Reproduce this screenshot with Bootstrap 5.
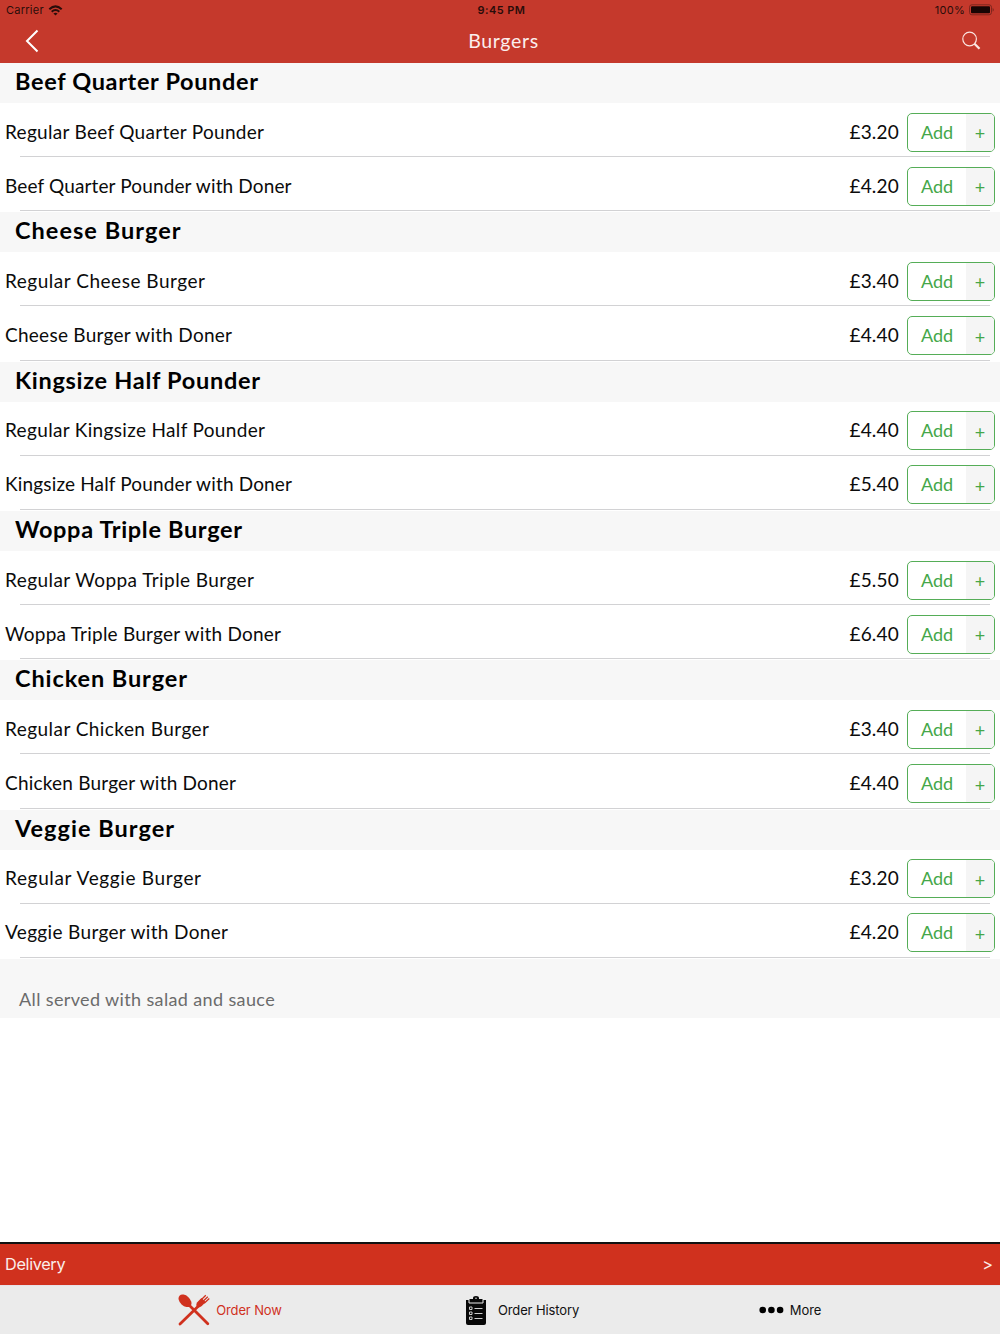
<!DOCTYPE html>
<html lang="en">
<head>
<meta charset="utf-8">
<meta name="viewport" content="width=device-width, initial-scale=1">
<title>Burgers</title>
<link rel="stylesheet" href="https://cdn.jsdelivr.net/npm/bootstrap@5.3.0/dist/css/bootstrap.min.css">
<style>
body{font-family:Lato,"Open Sans",sans-serif;color:#0b0b0b;height:1334px;overflow:hidden;background:#fff}
.topbar{height:63px;background:#c5392c;flex:none}
.status{height:20px;font:11px/20px Inter,sans-serif;color:#2a0d0a;padding:0 6px;letter-spacing:.25px}
.status>div,.titlebar>div{flex:1 1 0}
.status .ms-1:last-child{flex:none}
.clock{font-weight:600;letter-spacing:.45px;padding-left:3px}
.titlebar{height:43px;color:#fbeeee}
.page-title{font-size:19.5px;line-height:41px;letter-spacing:.65px;padding-left:7px}
.group{height:149.333px}
.group-head{height:40px;background:#f7f7f7;padding-left:15px;font-size:23.5px;line-height:37.5px;font-weight:700;color:#000;margin:0}
.item{height:54.166px;padding:0 5px;position:relative;font-size:19px;line-height:54px}
.item::after{content:"";position:absolute;left:20px;right:10px;bottom:0;height:1px;background:#d2d2d4}
.item-name{padding-top:3px}
.price{margin-right:8px;letter-spacing:.2px;padding-top:3px}
.add{width:88px;height:39px;border:1px solid #55ad57;border-radius:5px;background:#fff;color:#45a749;padding:0;overflow:hidden;margin-top:4px;font-family:Lato,sans-serif;font-size:18px;line-height:37px}
.add-label{width:58px}
.add-plus{flex:1;background:#f5f5f5;display:flex;align-items:center;justify-content:center;padding-top:3px}
.note{height:59px;background:#f7f7f7;padding:20px 0 0 19px;font-size:18px;line-height:40px;color:#6b6b6b;letter-spacing:.37px}
.delivery{height:43px;border-top:2px solid #111;background:#d0311e;color:#fbeeea;padding:0 7px 0 5px;font:16.3px/40px Inter,sans-serif;flex:none}
.delivery-label{letter-spacing:-.35px}
.tabs{height:49px;background:#ebebeb;border-top:1px solid #e7e2e8;font:13px/48px Inter,sans-serif;letter-spacing:-.12px;flex:none;padding-left:83px;padding-right:64px}
.tabs a{color:#111;text-decoration:none}
.tabs .on{color:#d0311e}
.tab-order{flex:0 0 294px}.tab-history{flex:0 0 291px}.tab-more{flex:0 0 244px}
.tab-order span{margin-left:6px}.tab-history span{margin-left:12px}.tab-more span{margin-left:6px}
</style>
<script src="https://cdn.jsdelivr.net/npm/bootstrap@5.3.0/dist/js/bootstrap.bundle.min.js"></script>
</head>
<body class="d-flex flex-column">
<header class="topbar">
  <div class="status d-flex">
    <div class="d-flex align-items-center"><span>Carrier</span>
      <svg class="ms-1" width="15" height="11" viewBox="0 0 15 11" fill="none" stroke="#2a0d0a" stroke-width="2"><path d="M1.3 4.3Q7.5-1.6 13.7 4.3M3.7 6.8Q7.5 3.2 11.3 6.8"/><path d="M7.5 10.6L5.4 8.5Q7.5 6.8 9.6 8.5Z" fill="#2a0d0a" stroke="none"/></svg></div>
    <div class="text-center clock">9:45 PM</div>
    <div class="d-flex align-items-center justify-content-end">100%
      <svg class="ms-1" width="25" height="12" viewBox="0 0 25 12"><rect x=".5" y=".8" width="22" height="10" rx="2.4" fill="none" stroke="#7f251d"/><rect x="2" y="2.3" width="19" height="7" rx="1" fill="#180504"/><path d="M23.6 4v3.6q1.2-.4 1.2-1.8T23.6 4z" fill="#7f251d"/></svg></div>
  </div>
  <div class="titlebar d-flex">
    <div><svg width="60" height="43" viewBox="0 0 60 43" fill="none" stroke="#fff" stroke-width="2"><path d="M37.500 10.500L27 21l10.500 10.500"/></svg></div>
    <div class="page-title text-center">Burgers</div>
    <div class="text-end"><svg width="40" height="43" viewBox="0 0 40 43" fill="none" stroke="#fbe5e1"><circle cx="9.600" cy="19" r="6.800" stroke-width="1.200"/><path d="M14.500 23.800l5 5" stroke-width="2.300"/></svg></div>
  </div>
</header>
<main class="flex-grow-1" id="menu"></main>
<div class="delivery d-flex justify-content-between"><span class="delivery-label">Delivery</span><span>&gt;</span></div>
<nav class="tabs d-flex">
  <a href="#" class="on tab-order d-flex align-items-center justify-content-center">
    <svg width="32" height="32" viewBox="0 0 32 32" fill="none" stroke="#d0311e"><ellipse cx="7" cy="6.800" rx="5" ry="7.500" transform="rotate(-47 7 6.800)" fill="#d0311e" stroke="none"/><path d="M10 10L29.800 29.800M21.500 11L2 30" stroke-width="2.800" stroke-linecap="round"/><path d="M19 8.500q-1.500 3 .2 4.400t4.600-.8l3.900-4-4.300-4.200z" fill="#d0311e" stroke="none"/><path d="M22.500 6.500l5.300-5.300M24.300 8l5.500-5.300M26.200 9.200l5.100-4.700" stroke-width="1.300"/></svg>
    <span>Order Now</span></a>
  <a href="#" class="tab-history d-flex align-items-center justify-content-center">
    <svg width="20" height="29" viewBox="0 0 20 29"><path d="M0 4h20v23q0 2-2 2H2q-2 0-2-2z" fill="#080808"/><path d="M3 3v4h14V3" fill="#080808" stroke="#ebebeb" stroke-width="1"/><path d="M4 6V4q0-1 1-1h2V2q0-2 3-2t3 2v1h2q1 0 1 1v2z" fill="#080808"/><circle cx="10" cy="2.300" r=".8" fill="#ddd"/><g fill="none" stroke="#ccc"><path d="M8.500 12.500h8M8.500 17.500h8M8.500 22.500h8" stroke-width="1.100"/><path d="M3.500 11h2.500v2.500H3.500zM3.500 16h2.500v2.500H3.500zM3.500 21h2.500v2.500H3.500z"/></g></svg>
    <span>Order History</span></a>
  <a href="#" class="tab-more d-flex align-items-center justify-content-center">
    <svg width="25" height="8" viewBox="0 0 25 8"><circle cx="3.700" cy="4" r="3.300"/><circle cx="12.400" cy="4" r="3.300"/><circle cx="21.100" cy="4" r="3.300"/></svg>
    <span>More</span></a>
</nav>
<script>
// Each label carries the width its letters are tracked to.
const groups=[
 ["Beef Quarter Pounder",243,["Regular Beef Quarter Pounder",259,"£3.20"],["Beef Quarter Pounder with Doner",286.5,"£4.20"]],
 ["Cheese Burger",165.500,["Regular Cheese Burger",200,"£3.40"],["Cheese Burger with Doner",227,"£4.40"]],
 ["Kingsize Half Pounder",245,["Regular Kingsize Half Pounder",260,"£4.40"],["Kingsize Half Pounder with Doner",287,"£5.40"]],
 ["Woppa Triple Burger",227,["Regular Woppa Triple Burger",249,"£5.50"],["Woppa Triple Burger with Doner",276,"£6.40"]],
 ["Chicken Burger",172,["Regular Chicken Burger",204,"£3.40"],["Chicken Burger with Doner",231,"£4.40"]],
 ["Veggie Burger",159,["Regular Veggie Burger",196,"£3.20"],["Veggie Burger with Doner",223,"£4.20"]]];
document.getElementById("menu").innerHTML=groups.map(([title,tw,...items])=>
 `<section class="group"><h2 class="group-head"><span data-w="${tw}">${title}</span></h2>`+items.map(([n,w,p])=>
 `<div class="item d-flex align-items-center"><span class="item-name" data-w="${w}">${n}</span><span class="price ms-auto">${p}</span><button class="add d-flex"><span class="add-label">Add</span><span class="add-plus">+</span></button></div>`).join("")+`</section>`).join("")+
 `<div class="note">All served with salad and sauce</div>`;
function track(){
 document.querySelectorAll("[data-w]").forEach(el=>{
  el.style.letterSpacing="0.01px";
  const gap=el.dataset.w-el.getBoundingClientRect().width;
  el.style.letterSpacing=(gap/(el.textContent.length-1)+.01).toFixed(3)+"px";
 });
}
track();
window.addEventListener("load",track);
</script>
</body>
</html>
